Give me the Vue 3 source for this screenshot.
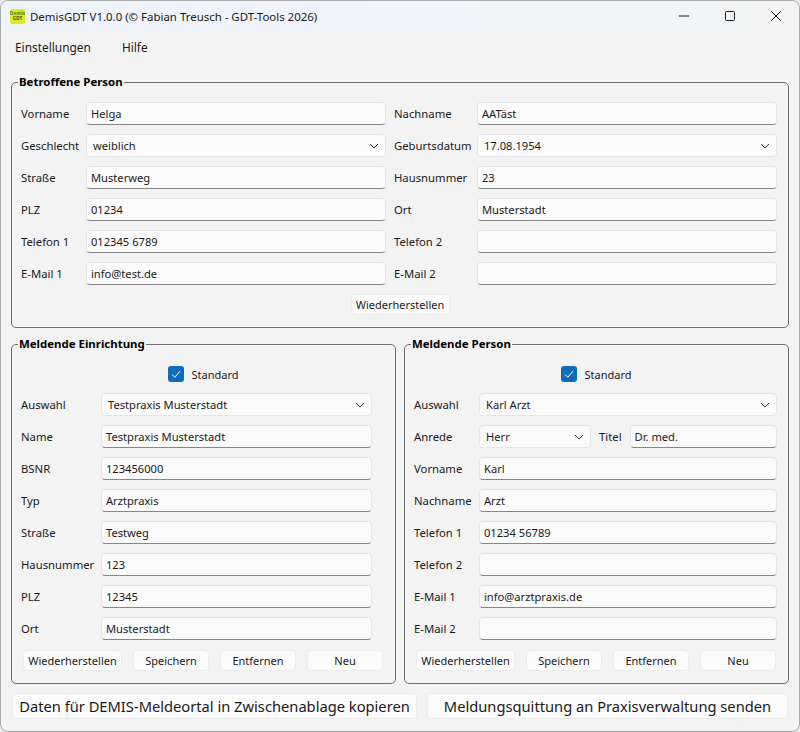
<script setup>
const person = [
  { a: 'Vorname', av: 'Helga', b: 'Nachname', bv: 'AATäst' },
  { a: 'Geschlecht', av: 'weiblich', aSelect: true, b: 'Geburtsdatum', bv: '17.08.1954', bSelect: true },
  { a: 'Straße', av: 'Musterweg', b: 'Hausnummer', bv: '23' },
  { a: 'PLZ', av: '01234', b: 'Ort', bv: 'Musterstadt' },
  { a: 'Telefon 1', av: '012345 6789', b: 'Telefon 2', bv: '' },
  { a: 'E-Mail 1', av: 'info@test.de', b: 'E-Mail 2', bv: '' }
]
const facility = [
  ['Name', 'Testpraxis Musterstadt'],
  ['BSNR', '123456000'],
  ['Typ', 'Arztpraxis'],
  ['Straße', 'Testweg'],
  ['Hausnummer', '123'],
  ['PLZ', '12345'],
  ['Ort', 'Musterstadt']
]
const reporter = [
  ['Vorname', 'Karl'],
  ['Nachname', 'Arzt'],
  ['Telefon 1', '01234 56789'],
  ['Telefon 2', ''],
  ['E-Mail 1', 'info@arztpraxis.de'],
  ['E-Mail 2', '']
]
const actions = ['Wiederherstellen', 'Speichern', 'Entfernen', 'Neu']
</script>

<template>
  <div class="window">
    <header class="titlebar">
      <div class="logo"><span>Demis</span><span class="logo-b">GDT</span></div>
      <div class="title">DemisGDT V1.0.0 (© Fabian Treusch - GDT-Tools 2026)</div>
      <div class="controls">
        <svg width="12" height="12" viewBox="0 0 12 12"><path d="M1 6h10" stroke="#1a1a1a" fill="none" /></svg>
        <svg width="12" height="12" viewBox="0 0 12 12"><rect x="1.5" y="1.5" width="9" height="9" rx="1" stroke="#1a1a1a" fill="none" /></svg>
        <svg width="12" height="12" viewBox="0 0 12 12"><path d="M1 1l10 10M11 1L1 11" stroke="#1a1a1a" fill="none" /></svg>
      </div>
    </header>

    <nav class="menu">
      <span>Einstellungen</span>
      <span>Hilfe</span>
    </nav>

    <main class="content">
      <fieldset class="group">
        <legend>Betroffene Person</legend>
        <div class="person-grid">
          <template v-for="row in person" :key="row.a">
            <label class="lbl">{{ row.a }}</label>
            <div v-if="row.aSelect" class="combo">
              <span>{{ row.av }}</span>
              <svg width="10" height="6" viewBox="0 0 10 6"><path d="M1 1l4 4 4-4" stroke="#333" fill="none" /></svg>
            </div>
            <input v-else class="field" :value="row.av" readonly />
            <label class="lbl lbl-right">{{ row.b }}</label>
            <div v-if="row.bSelect" class="combo">
              <span>{{ row.bv }}</span>
              <svg width="10" height="6" viewBox="0 0 10 6"><path d="M1 1l4 4 4-4" stroke="#333" fill="none" /></svg>
            </div>
            <input v-else class="field" :value="row.bv" readonly />
          </template>
        </div>
        <div class="restore-row">
          <button class="btn restore">Wiederherstellen</button>
        </div>
      </fieldset>

      <div class="columns">
        <fieldset class="group sub">
          <legend>Meldende Einrichtung</legend>
          <div class="standard">
            <span class="check"><svg width="12" height="12" viewBox="0 0 12 12"><path d="M2 6.5l2.8 2.8L10 3.2" stroke="#fff" fill="none" /></svg></span>
            <span>Standard</span>
          </div>
          <div class="form form-left">
            <label class="lbl">Auswahl</label>
            <div class="combo">
              <span>Testpraxis Musterstadt</span>
              <svg width="10" height="6" viewBox="0 0 10 6"><path d="M1 1l4 4 4-4" stroke="#333" fill="none" /></svg>
            </div>
            <template v-for="f in facility" :key="f[0]">
              <label class="lbl">{{ f[0] }}</label>
              <input class="field" :value="f[1]" readonly />
            </template>
          </div>
          <div class="actions">
            <button v-for="a in actions" :key="a" class="btn">{{ a }}</button>
          </div>
        </fieldset>

        <fieldset class="group sub">
          <legend>Meldende Person</legend>
          <div class="standard">
            <span class="check"><svg width="12" height="12" viewBox="0 0 12 12"><path d="M2 6.5l2.8 2.8L10 3.2" stroke="#fff" fill="none" /></svg></span>
            <span>Standard</span>
          </div>
          <div class="form form-right">
            <label class="lbl">Auswahl</label>
            <div class="combo">
              <span>Karl Arzt</span>
              <svg width="10" height="6" viewBox="0 0 10 6"><path d="M1 1l4 4 4-4" stroke="#333" fill="none" /></svg>
            </div>
            <label class="lbl">Anrede</label>
            <div class="salutation">
              <div class="combo">
                <span>Herr</span>
                <svg width="10" height="6" viewBox="0 0 10 6"><path d="M1 1l4 4 4-4" stroke="#333" fill="none" /></svg>
              </div>
              <label class="lbl">Titel</label>
              <input class="field" value="Dr. med." readonly />
            </div>
            <template v-for="f in reporter" :key="f[0]">
              <label class="lbl">{{ f[0] }}</label>
              <input class="field" :value="f[1]" readonly />
            </template>
          </div>
          <div class="actions">
            <button v-for="a in actions" :key="a" class="btn">{{ a }}</button>
          </div>
        </fieldset>
      </div>

      <div class="bottom">
        <button class="btn big first">Daten für DEMIS-Meldeortal in Zwischenablage kopieren</button>
        <button class="btn big second">Meldungsquittung an Praxisverwaltung senden</button>
      </div>
    </main>
  </div>
</template>

<style>
html, body { margin: 0; background: #e9e9e9; }
</style>

<style scoped>
.window {
  width: 800px;
  height: 732px;
  box-sizing: border-box;
  border: 1px solid #a9a9a9;
  border-radius: 8px;
  background: #f3f3f3;
  font-family: "Noto Sans", "Open Sans", sans-serif;
  font-size: 11.3px;
  color: #1a1a1a;
  overflow: hidden;
  display: flex;
  flex-direction: column;
}
.titlebar {
  height: 30px;
  flex: none;
  display: flex;
  align-items: center;
  padding-left: 9px;
  background: linear-gradient(90deg, #eef3fa 0%, #f1f4f9 50%, #f3f3f3 100%);
}
.logo {
  width: 15px;
  height: 15px;
  border-radius: 2px;
  background: #d6ef22;
  color: #5f7f1c;
  font-size: 5px;
  font-weight: 700;
  line-height: 5.5px;
  display: flex;
  flex-direction: column;
  align-items: center;
  justify-content: center;
  overflow: hidden;
}
.logo-b { color: #3d5a16; }
.title {
  margin-left: 5px;
  flex: 1;
  font-size: 11.45px;
}
.controls {
  display: flex;
  gap: 34px;
  padding-right: 17px;
}
.menu {
  height: 32px;
  flex: none;
  display: flex;
  align-items: center;
  gap: 31px;
  padding-left: 14px;
  font-size: 11.9px;
}
.content {
  padding: 11px 10px 0;
  display: flex;
  flex-direction: column;
}
.group {
  margin: 0;
  padding: 12px 9px 12px;
  border: 1px solid #6e6e6e;
  border-radius: 5px;
  min-width: 0;
}
legend {
  margin-left: -3px;
  padding: 0 1px;
  font-weight: 700;
  font-size: 11.45px;
  line-height: 16px;
  color: #000;
}
.person-grid {
  display: grid;
  grid-template-columns: 65px 300px 91px 300px;
  grid-auto-rows: 23px;
  row-gap: 9px;
  align-items: center;
}
.lbl-right { margin-left: 8px; }
.lbl { white-space: nowrap; font-size: 11.3px; }
.field, .combo {
  box-sizing: border-box;
  height: 23px;
  width: 100%;
  border: 1px solid #e6e6e6;
  border-radius: 4px;
  background: #fbfbfb;
  font: inherit;
  font-size: 11.15px;
  color: inherit;
}
.field {
  border-bottom-color: #868686;
  padding: 0 4px;
  outline: none;
}
.combo {
  display: flex;
  align-items: center;
  justify-content: space-between;
  padding: 0 6px 0 6px;
}
.restore-row {
  display: flex;
  justify-content: center;
  margin-top: 9px;
}
.btn {
  box-sizing: border-box;
  height: 21px;
  border: 1px solid #ececec;
  border-radius: 4px;
  background: #fbfbfb;
  font: inherit;
  font-size: 11px;
  color: inherit;
  padding: 0;
  white-space: nowrap;
}
.restore { width: 99px; }
.columns {
  display: grid;
  grid-template-columns: 385px 385px;
  column-gap: 8px;
  margin-top: 8px;
}
.sub { padding-top: 13px; padding-bottom: 12px; }
.standard {
  display: flex;
  justify-content: center;
  align-items: center;
  gap: 7px;
  height: 18px;
  font-size: 11px;
}
.check {
  width: 16px;
  height: 16px;
  border-radius: 3px;
  background: #0f6cbd;
  display: flex;
  align-items: center;
  justify-content: center;
}
.form {
  display: grid;
  grid-auto-rows: 23px;
  row-gap: 9px;
  align-items: center;
  margin-top: 10px;
}
.form-left { grid-template-columns: 80px 271px; }
.form-right { grid-template-columns: 65px 298px; }
.salutation {
  display: grid;
  grid-template-columns: 112px auto 1fr;
  align-items: center;
  column-gap: 8px;
}
.actions {
  display: flex;
  gap: 11px;
  margin-top: 10px;
  padding-left: 2px;
}
.actions .btn { width: 76px; }
.actions .btn:first-child { width: 99px; }
.bottom {
  display: flex;
  justify-content: space-between;
  margin-top: 9px;
  padding: 0 1px;
}
.big {
  height: 26px;
  font-size: 14.7px;
}
.first { width: 405px; }
.second { width: 361px; }
</style>
